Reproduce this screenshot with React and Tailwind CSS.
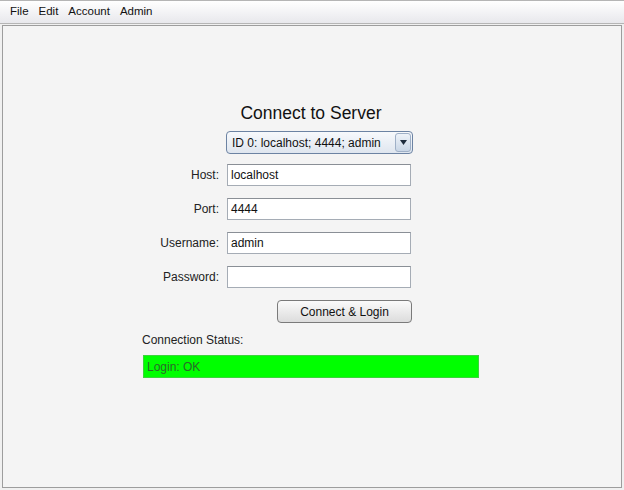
import React from "react"

const font = { fontFamily: "Tahoma, 'Liberation Sans', Arial, sans-serif" }

function Field({ label, value }) {
  return (
    <div className="flex items-center h-[22px]">
      <div className="w-[80px] text-right text-[12px] text-[#222]">{label}</div>
      <div className="ml-[8px] w-[184px] h-[22px] bg-white border border-[#a5acb5] border-t-[#8a8f96] flex items-center px-[3px] text-[12px] text-[#111]">
        {value}
      </div>
    </div>
  )
}

export default function App() {
  return (
    <div className="w-[624px] h-[490px] bg-[#f0f0f0] overflow-hidden" style={font}>
      {/* Menu bar */}
      <div className="h-[24px] border-t border-[#9a9a9a] bg-gradient-to-b from-[#ffffff] to-[#e8e8ec] flex items-center gap-[10px] pl-[10px] text-[11.5px] text-[#111] border-b border-[#b5b5b5]">
        <span>File</span>
        <span>Edit</span>
        <span>Account</span>
        <span>Admin</span>
      </div>

      {/* Panel */}
      <div className="ml-[2px] mt-[1px] w-[620px] h-[463px] border border-[#9d9d9d] bg-[#f4f4f4]">
        <div className="ml-[136px] w-[338px] pt-[77px] flex flex-col">
          <div className="pl-[6px] text-center text-[17.5px] text-[#111] leading-[20px]">Connect to Server</div>

          <div className="mt-[8px] ml-[87px] w-[187px] h-[23px] rounded-[4px] border border-[#6c83a3] bg-gradient-to-b from-[#f7f9fc] to-[#dfe6ef] flex items-center">
            <span className="flex-1 pl-[5px] text-[12px] text-[#111]">ID 0: localhost; 4444; admin</span>
            <div className="w-[16px] h-[19px] mr-[1px] rounded-[3px] border border-[#9fb0c7] bg-gradient-to-b from-[#eef3f9] to-[#c9d6e6] flex items-center justify-center">
              <svg width="7" height="5" viewBox="0 0 7 5"><path d="M0 0h7L3.5 5z" fill="#1d2b3c" /></svg>
            </div>
          </div>

          <div className="mt-[10px] flex flex-col gap-[12px]">
            <Field label="Host:" value="localhost" />
            <Field label="Port:" value="4444" />
            <Field label="Username:" value="admin" />
            <Field label="Password:" value="" />
          </div>

          <div className="mt-[12px] ml-[138px] w-[135px] h-[23px] rounded-[4px] border border-[#7a7a7a] bg-gradient-to-b from-[#fbfbfb] to-[#dcdcdc] flex items-center justify-center text-[12px] text-[#111]">
            Connect &amp; Login
          </div>

          <div className="mt-[10px] ml-[3px] text-[12px] text-[#222] leading-[14px]">Connection Status:</div>

          <div className="mt-[8px] ml-[4px] w-[336px] h-[23px] bg-[#00ff00] border border-[#3bd43b] flex items-center pl-[3px] text-[12px] text-[#2a6a2a]">
            Login: OK
          </div>
        </div>
      </div>
    </div>
  )
}
